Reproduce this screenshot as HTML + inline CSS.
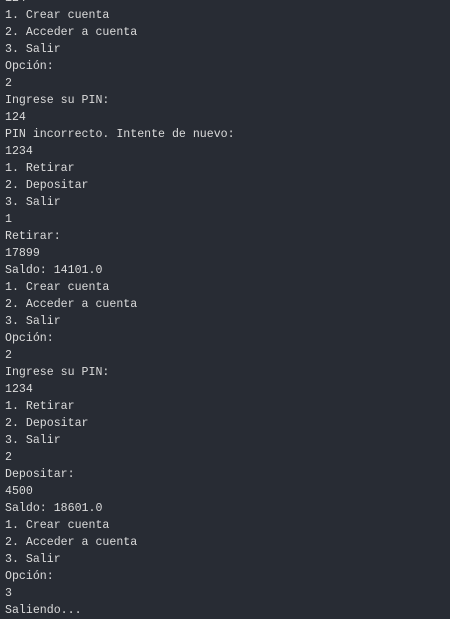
<!DOCTYPE html>
<html><head><meta charset="utf-8"><style>
html,body{margin:0;padding:0;background:#282c34;width:450px;height:617px;overflow:hidden}
pre{margin:0;position:absolute;left:5px;top:-10px;font-family:"Liberation Mono",monospace;font-size:11.6px;line-height:17px;color:#dcdcdc}
</style></head><body><pre>124
1. Crear cuenta
2. Acceder a cuenta
3. Salir
Opción:
2
Ingrese su PIN:
124
PIN incorrecto. Intente de nuevo:
1234
1. Retirar
2. Depositar
3. Salir
1
Retirar:
17899
Saldo: 14101.0
1. Crear cuenta
2. Acceder a cuenta
3. Salir
Opción:
2
Ingrese su PIN:
1234
1. Retirar
2. Depositar
3. Salir
2
Depositar:
4500
Saldo: 18601.0
1. Crear cuenta
2. Acceder a cuenta
3. Salir
Opción:
3
Saliendo...</pre></body></html>
